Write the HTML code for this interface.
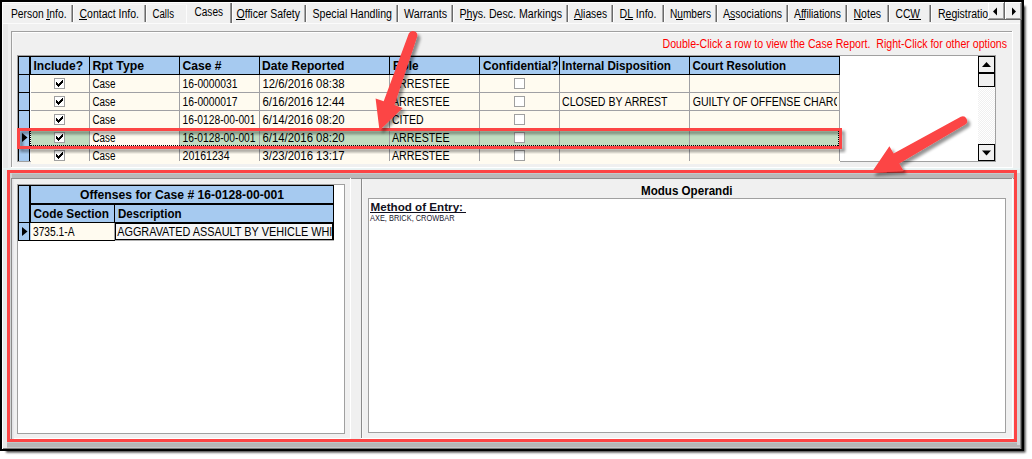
<!DOCTYPE html>
<html><head><meta charset="utf-8"><style>
html,body{margin:0;padding:0;background:#fff;}
body{width:1032px;height:459px;overflow:hidden;font-family:"Liberation Sans",sans-serif;}
svg text{font-family:"Liberation Sans",sans-serif;}
svg{display:block;}
</style></head><body>
<svg width="1032" height="459" viewBox="0 0 1032 459">
<defs>
<filter id="wsh" x="-5%" y="-5%" width="110%" height="110%"><feGaussianBlur stdDeviation="1.3"/></filter>
<filter id="ash" x="-20%" y="-20%" width="140%" height="140%">
 <feGaussianBlur in="SourceAlpha" stdDeviation="1.6"/>
 <feOffset dx="3" dy="3" result="o"/>
 <feComponentTransfer><feFuncA type="linear" slope="0.42"/></feComponentTransfer>
 <feMerge><feMergeNode/><feMergeNode in="SourceGraphic"/></feMerge>
</filter>
<pattern id="dith" width="2" height="2" patternUnits="userSpaceOnUse"><rect width="2" height="2" fill="#f0f0f0"/><rect width="1" height="1" fill="#fff"/><rect x="1" y="1" width="1" height="1" fill="#fff"/></pattern>
</defs>
<rect x="0" y="0" width="1032" height="459" fill="#fff"/>
<rect x="6" y="6" width="1019.5" height="446.5" fill="#000" opacity="0.75" filter="url(#wsh)"/>
<g shape-rendering="crispEdges">
<rect x="0" y="0" width="1024" height="451" fill="#f0f0f0"/>
<rect x="0" y="0" width="1024" height="2" fill="#000"/>
<rect x="0" y="449" width="1024" height="2" fill="#000"/>
<rect x="0" y="0" width="2" height="451" fill="#000"/>
<rect x="1022" y="0" width="2" height="451" fill="#000"/>
<rect x="2" y="2" width="1" height="447" fill="#fff"/>
<rect x="2" y="2" width="1020" height="1" fill="#fff"/>
<rect x="1021" y="2" width="1" height="447" fill="#3a3a3a"/>
<rect x="1020" y="2" width="1" height="447" fill="#8c8c8c"/>
<rect x="3" y="24" width="5" height="425" fill="#e8e8e8"/>
<rect x="3" y="23" width="1017" height="1" fill="#fbfbfb"/>
<rect x="71" y="5" width="1" height="17" fill="#a8a8a8"/>
<rect x="72" y="5" width="1" height="17" fill="#6a6a6a"/>
<rect x="73" y="5" width="1" height="17" fill="#fcfcfc"/>
<rect x="144" y="5" width="1" height="17" fill="#a8a8a8"/>
<rect x="145" y="5" width="1" height="17" fill="#6a6a6a"/>
<rect x="146" y="5" width="1" height="17" fill="#fcfcfc"/>
<rect x="304" y="5" width="1" height="17" fill="#a8a8a8"/>
<rect x="305" y="5" width="1" height="17" fill="#6a6a6a"/>
<rect x="306" y="5" width="1" height="17" fill="#fcfcfc"/>
<rect x="396" y="5" width="1" height="17" fill="#a8a8a8"/>
<rect x="397" y="5" width="1" height="17" fill="#6a6a6a"/>
<rect x="398" y="5" width="1" height="17" fill="#fcfcfc"/>
<rect x="451" y="5" width="1" height="17" fill="#a8a8a8"/>
<rect x="452" y="5" width="1" height="17" fill="#6a6a6a"/>
<rect x="453" y="5" width="1" height="17" fill="#fcfcfc"/>
<rect x="566" y="5" width="1" height="17" fill="#a8a8a8"/>
<rect x="567" y="5" width="1" height="17" fill="#6a6a6a"/>
<rect x="568" y="5" width="1" height="17" fill="#fcfcfc"/>
<rect x="611" y="5" width="1" height="17" fill="#a8a8a8"/>
<rect x="612" y="5" width="1" height="17" fill="#6a6a6a"/>
<rect x="613" y="5" width="1" height="17" fill="#fcfcfc"/>
<rect x="662" y="5" width="1" height="17" fill="#a8a8a8"/>
<rect x="663" y="5" width="1" height="17" fill="#6a6a6a"/>
<rect x="664" y="5" width="1" height="17" fill="#fcfcfc"/>
<rect x="715" y="5" width="1" height="17" fill="#a8a8a8"/>
<rect x="716" y="5" width="1" height="17" fill="#6a6a6a"/>
<rect x="717" y="5" width="1" height="17" fill="#fcfcfc"/>
<rect x="786" y="5" width="1" height="17" fill="#a8a8a8"/>
<rect x="787" y="5" width="1" height="17" fill="#6a6a6a"/>
<rect x="788" y="5" width="1" height="17" fill="#fcfcfc"/>
<rect x="845" y="5" width="1" height="17" fill="#a8a8a8"/>
<rect x="846" y="5" width="1" height="17" fill="#6a6a6a"/>
<rect x="847" y="5" width="1" height="17" fill="#fcfcfc"/>
<rect x="887" y="5" width="1" height="17" fill="#a8a8a8"/>
<rect x="888" y="5" width="1" height="17" fill="#6a6a6a"/>
<rect x="889" y="5" width="1" height="17" fill="#fcfcfc"/>
<rect x="929" y="5" width="1" height="17" fill="#a8a8a8"/>
<rect x="930" y="5" width="1" height="17" fill="#6a6a6a"/>
<rect x="931" y="5" width="1" height="17" fill="#fcfcfc"/>
<rect x="230" y="3" width="1" height="20" fill="#909090"/>
<rect x="231" y="3" width="1" height="20" fill="#6a6a6a"/>
<rect x="232" y="3" width="1" height="20" fill="#fcfcfc"/>
<rect x="186" y="4" width="1" height="20" fill="#fcfcfc"/>
<rect x="3" y="4" width="184" height="1" fill="#f6f6f6"/>
<text x="11" y="18" font-size="12" textLength="55.5" lengthAdjust="spacingAndGlyphs" xml:space="preserve">Person Info.</text>
<rect x="46" y="19" width="4" height="1" fill="#000"/>
<text x="79.5" y="18" font-size="12" textLength="59.5" lengthAdjust="spacingAndGlyphs" xml:space="preserve">Contact Info.</text>
<rect x="79" y="19" width="8" height="1" fill="#000"/>
<text x="152.5" y="18" font-size="12" textLength="21.5" lengthAdjust="spacingAndGlyphs" xml:space="preserve">Calls</text>
<text x="236.5" y="18" font-size="12" textLength="63.5" lengthAdjust="spacingAndGlyphs" xml:space="preserve">Officer Safety</text>
<rect x="236" y="19" width="9" height="1" fill="#000"/>
<text x="312.5" y="18" font-size="12" textLength="79.5" lengthAdjust="spacingAndGlyphs" xml:space="preserve">Special Handling</text>
<text x="404" y="18" font-size="12" textLength="43" lengthAdjust="spacingAndGlyphs" xml:space="preserve">Warrants</text>
<text x="459.5" y="18" font-size="12" textLength="102.5" lengthAdjust="spacingAndGlyphs" xml:space="preserve">Phys. Desc. Markings</text>
<rect x="465" y="19" width="7" height="1" fill="#000"/>
<text x="574" y="18" font-size="12" textLength="33" lengthAdjust="spacingAndGlyphs" xml:space="preserve">Aliases</text>
<rect x="574" y="19" width="8" height="1" fill="#000"/>
<text x="619.5" y="18" font-size="12" textLength="37.0" lengthAdjust="spacingAndGlyphs" xml:space="preserve">DL Info.</text>
<rect x="625" y="19" width="8" height="1" fill="#000"/>
<text x="670" y="18" font-size="12" textLength="41" lengthAdjust="spacingAndGlyphs" xml:space="preserve">Numbers</text>
<rect x="676" y="19" width="7" height="1" fill="#000"/>
<text x="723" y="18" font-size="12" textLength="59" lengthAdjust="spacingAndGlyphs" xml:space="preserve">Associations</text>
<rect x="729" y="19" width="6" height="1" fill="#000"/>
<text x="794" y="18" font-size="12" textLength="47" lengthAdjust="spacingAndGlyphs" xml:space="preserve">Affiliations</text>
<rect x="799" y="19" width="6" height="1" fill="#000"/>
<text x="853.5" y="18" font-size="12" textLength="27.5" lengthAdjust="spacingAndGlyphs" xml:space="preserve">Notes</text>
<rect x="854" y="19" width="8" height="1" fill="#000"/>
<text x="895.5" y="18" font-size="12" textLength="24.5" lengthAdjust="spacingAndGlyphs" xml:space="preserve">CCW</text>
<rect x="909" y="19" width="12" height="1" fill="#000"/>
<text x="194.5" y="16" font-size="12" textLength="28.5" lengthAdjust="spacingAndGlyphs" xml:space="preserve">Cases</text>
<svg x="930" y="0" width="58" height="24" overflow="hidden">
<text x="8" y="18" font-size="12" textLength="56" lengthAdjust="spacingAndGlyphs" xml:space="preserve">Registration</text>
</svg>
<rect x="945" y="19" width="7" height="1" fill="#000"/>
<rect x="988" y="2" width="17" height="18" fill="#f0f0f0"/>
<rect x="988" y="2" width="17" height="1" fill="#fff"/>
<rect x="988" y="2" width="1" height="18" fill="#fff"/>
<rect x="988" y="19" width="17" height="1" fill="#696969"/>
<rect x="1004" y="2" width="1" height="18" fill="#696969"/>
<rect x="989" y="18" width="15" height="1" fill="#a0a0a0"/>
<rect x="1003" y="3" width="1" height="16" fill="#a0a0a0"/>
<rect x="1005" y="2" width="17" height="18" fill="#f0f0f0"/>
<rect x="1005" y="2" width="17" height="1" fill="#fff"/>
<rect x="1005" y="2" width="1" height="18" fill="#fff"/>
<rect x="1005" y="19" width="17" height="1" fill="#696969"/>
<rect x="1021" y="2" width="1" height="18" fill="#696969"/>
<rect x="1006" y="18" width="15" height="1" fill="#a0a0a0"/>
<rect x="1020" y="3" width="1" height="16" fill="#a0a0a0"/>
<path d="M993 11.5 L997 7.5 L997 15.5 Z" fill="#000" shape-rendering="auto"/>
<path d="M1016 11.5 L1012 7.5 L1012 15.5 Z" fill="#000" shape-rendering="auto"/>
<rect x="11" y="31" width="1001" height="1" fill="#a0a0a0"/>
<rect x="12" y="32" width="1001" height="1" fill="#fff"/>
<rect x="11" y="31" width="1" height="136" fill="#a0a0a0"/>
<rect x="12" y="32" width="1" height="135" fill="#f8f8f8"/>
<rect x="1012" y="31" width="1" height="137" fill="#fff"/>
<rect x="11" y="167" width="1002" height="1" fill="#fff"/>
<text x="662.5" y="48" font-size="12" fill="#ff0000" textLength="344.5" lengthAdjust="spacingAndGlyphs" xml:space="preserve">Double-Click a row to view the Case Report.  Right-Click for other options</text>
<rect x="17" y="55" width="979" height="107" fill="#fff"/>
<rect x="17" y="55" width="979" height="1" fill="#a0a0a0"/>
<rect x="17" y="55" width="1" height="107" fill="#a0a0a0"/>
<rect x="995" y="55" width="1" height="107" fill="#a0a0a0"/>
<rect x="17" y="161" width="979" height="1" fill="#a0a0a0"/>
<rect x="18" y="56" width="822" height="19" fill="#a6caf0"/>
<rect x="31" y="75" width="809" height="17" fill="#fffbf0"/>
<rect x="31" y="93" width="809" height="17" fill="#fffbf0"/>
<rect x="31" y="111" width="809" height="17" fill="#fffbf0"/>
<rect x="31" y="129" width="809" height="17" fill="#fffbf0"/>
<rect x="31" y="147" width="809" height="17" fill="#fffbf0"/>
<rect x="31" y="129" width="809" height="17" fill="#c0dcc0"/>
<rect x="90" y="129" width="89" height="17" fill="#fffbf0"/>
<rect x="19" y="75" width="10" height="86" fill="#a6caf0"/>
<rect x="31" y="92" width="809" height="1" fill="#a0a0a4"/>
<rect x="31" y="110" width="809" height="1" fill="#a0a0a4"/>
<rect x="31" y="128" width="809" height="1" fill="#a0a0a4"/>
<rect x="31" y="146" width="809" height="1" fill="#a0a0a4"/>
<rect x="89" y="75" width="1" height="86" fill="#a0a0a4"/>
<rect x="179" y="75" width="1" height="86" fill="#a0a0a4"/>
<rect x="259" y="75" width="1" height="86" fill="#a0a0a4"/>
<rect x="389" y="75" width="1" height="86" fill="#a0a0a4"/>
<rect x="479" y="75" width="1" height="86" fill="#a0a0a4"/>
<rect x="559" y="75" width="1" height="86" fill="#a0a0a4"/>
<rect x="689" y="75" width="1" height="86" fill="#a0a0a4"/>
<rect x="839" y="75" width="1" height="86" fill="#a0a0a4"/>
<rect x="18" y="56" width="822" height="1" fill="#000"/>
<rect x="18" y="74" width="822" height="1" fill="#000"/>
<rect x="18" y="56" width="1" height="105" fill="#000"/>
<rect x="29" y="56" width="1" height="105" fill="#000"/>
<rect x="30" y="56" width="1" height="19" fill="#000"/>
<rect x="89" y="56" width="1" height="19" fill="#000"/>
<rect x="179" y="56" width="1" height="19" fill="#000"/>
<rect x="259" y="56" width="1" height="19" fill="#000"/>
<rect x="389" y="56" width="1" height="19" fill="#000"/>
<rect x="479" y="56" width="1" height="19" fill="#000"/>
<rect x="559" y="56" width="1" height="19" fill="#000"/>
<rect x="689" y="56" width="1" height="19" fill="#000"/>
<rect x="839" y="56" width="1" height="19" fill="#000"/>
<rect x="19" y="92" width="10" height="1" fill="#000"/>
<rect x="19" y="110" width="10" height="1" fill="#000"/>
<rect x="19" y="128" width="10" height="1" fill="#000"/>
<rect x="19" y="146" width="10" height="1" fill="#000"/>
<text x="33.5" y="70" font-size="12" font-weight="bold" textLength="49.5" lengthAdjust="spacingAndGlyphs" xml:space="preserve">Include?</text>
<text x="92.5" y="70" font-size="12" font-weight="bold" textLength="51.5" lengthAdjust="spacingAndGlyphs" xml:space="preserve">Rpt Type</text>
<text x="182.5" y="70" font-size="12" font-weight="bold" textLength="39.0" lengthAdjust="spacingAndGlyphs" xml:space="preserve">Case #</text>
<text x="262" y="70" font-size="12" font-weight="bold" textLength="82.5" lengthAdjust="spacingAndGlyphs" xml:space="preserve">Date Reported</text>
<text x="393" y="70" font-size="12" font-weight="bold" textLength="25.5" lengthAdjust="spacingAndGlyphs" xml:space="preserve">Role</text>
<text x="483" y="70" font-size="12" font-weight="bold" textLength="75.5" lengthAdjust="spacingAndGlyphs" xml:space="preserve">Confidential?</text>
<text x="562" y="70" font-size="12" font-weight="bold" textLength="109" lengthAdjust="spacingAndGlyphs" xml:space="preserve">Internal Disposition</text>
<text x="692.5" y="70" font-size="12" font-weight="bold" textLength="93.5" lengthAdjust="spacingAndGlyphs" xml:space="preserve">Court Resolution</text>
</g>
<svg x="0" y="0" width="1032" height="161" overflow="hidden">
<text x="92.5" y="88" font-size="12" textLength="23" lengthAdjust="spacingAndGlyphs" xml:space="preserve">Case</text>
<text x="182.5" y="88" font-size="12" textLength="55" lengthAdjust="spacingAndGlyphs" xml:space="preserve">16-0000031</text>
<text x="262.5" y="88" font-size="12" textLength="82" lengthAdjust="spacingAndGlyphs" xml:space="preserve">12/6/2016 08:38</text>
<text x="392" y="88" font-size="12" textLength="57.5" lengthAdjust="spacingAndGlyphs" xml:space="preserve">ARRESTEE</text>
<text x="92.5" y="106" font-size="12" textLength="23" lengthAdjust="spacingAndGlyphs" xml:space="preserve">Case</text>
<text x="182.5" y="106" font-size="12" textLength="55" lengthAdjust="spacingAndGlyphs" xml:space="preserve">16-0000017</text>
<text x="262.5" y="106" font-size="12" textLength="82" lengthAdjust="spacingAndGlyphs" xml:space="preserve">6/16/2016 12:44</text>
<text x="392" y="106" font-size="12" textLength="57.5" lengthAdjust="spacingAndGlyphs" xml:space="preserve">ARRESTEE</text>
<text x="562" y="106" font-size="12" textLength="105.5" lengthAdjust="spacingAndGlyphs" xml:space="preserve">CLOSED BY ARREST</text>
<svg x="690" y="0" width="147" height="161" overflow="hidden">
<text x="2.7" y="106" font-size="12" textLength="156" lengthAdjust="spacingAndGlyphs" xml:space="preserve">GUILTY OF OFFENSE CHARGE</text>
</svg>
<text x="92.5" y="124" font-size="12" textLength="23" lengthAdjust="spacingAndGlyphs" xml:space="preserve">Case</text>
<text x="182.5" y="124" font-size="12" textLength="73" lengthAdjust="spacingAndGlyphs" xml:space="preserve">16-0128-00-001</text>
<text x="262.5" y="124" font-size="12" textLength="82" lengthAdjust="spacingAndGlyphs" xml:space="preserve">6/14/2016 08:20</text>
<text x="392" y="124" font-size="12" textLength="31.5" lengthAdjust="spacingAndGlyphs" xml:space="preserve">CITED</text>
<text x="92.5" y="142" font-size="12" textLength="23" lengthAdjust="spacingAndGlyphs" xml:space="preserve">Case</text>
<text x="182.5" y="142" font-size="12" textLength="73" lengthAdjust="spacingAndGlyphs" xml:space="preserve">16-0128-00-001</text>
<text x="262.5" y="142" font-size="12" textLength="82" lengthAdjust="spacingAndGlyphs" xml:space="preserve">6/14/2016 08:20</text>
<text x="392" y="142" font-size="12" textLength="57.5" lengthAdjust="spacingAndGlyphs" xml:space="preserve">ARRESTEE</text>
<text x="92.5" y="160" font-size="12" textLength="23" lengthAdjust="spacingAndGlyphs" xml:space="preserve">Case</text>
<text x="182.5" y="160" font-size="12" textLength="47" lengthAdjust="spacingAndGlyphs" xml:space="preserve">20161234</text>
<text x="262.5" y="160" font-size="12" textLength="82" lengthAdjust="spacingAndGlyphs" xml:space="preserve">3/23/2016 13:17</text>
<text x="392" y="160" font-size="12" textLength="57.5" lengthAdjust="spacingAndGlyphs" xml:space="preserve">ARRESTEE</text>
</svg>
<g shape-rendering="crispEdges">
<rect x="54" y="78" width="11" height="11" fill="#a0a0a0"/>
<rect x="55" y="79" width="9" height="9" fill="#fff"/>
<rect x="62" y="80" width="1" height="1" fill="#000"/>
<rect x="61" y="81" width="1" height="1" fill="#000"/>
<rect x="62" y="81" width="1" height="1" fill="#000"/>
<rect x="56" y="82" width="1" height="1" fill="#000"/>
<rect x="60" y="82" width="1" height="1" fill="#000"/>
<rect x="61" y="82" width="1" height="1" fill="#000"/>
<rect x="62" y="82" width="1" height="1" fill="#000"/>
<rect x="56" y="83" width="1" height="1" fill="#000"/>
<rect x="57" y="83" width="1" height="1" fill="#000"/>
<rect x="59" y="83" width="1" height="1" fill="#000"/>
<rect x="60" y="83" width="1" height="1" fill="#000"/>
<rect x="61" y="83" width="1" height="1" fill="#000"/>
<rect x="56" y="84" width="1" height="1" fill="#000"/>
<rect x="57" y="84" width="1" height="1" fill="#000"/>
<rect x="58" y="84" width="1" height="1" fill="#000"/>
<rect x="59" y="84" width="1" height="1" fill="#000"/>
<rect x="60" y="84" width="1" height="1" fill="#000"/>
<rect x="57" y="85" width="1" height="1" fill="#000"/>
<rect x="58" y="85" width="1" height="1" fill="#000"/>
<rect x="59" y="85" width="1" height="1" fill="#000"/>
<rect x="58" y="86" width="1" height="1" fill="#000"/>
<rect x="514" y="78" width="11" height="11" fill="#a0a0a0"/>
<rect x="515" y="79" width="9" height="9" fill="#fff"/>
<rect x="54" y="96" width="11" height="11" fill="#a0a0a0"/>
<rect x="55" y="97" width="9" height="9" fill="#fff"/>
<rect x="62" y="98" width="1" height="1" fill="#000"/>
<rect x="61" y="99" width="1" height="1" fill="#000"/>
<rect x="62" y="99" width="1" height="1" fill="#000"/>
<rect x="56" y="100" width="1" height="1" fill="#000"/>
<rect x="60" y="100" width="1" height="1" fill="#000"/>
<rect x="61" y="100" width="1" height="1" fill="#000"/>
<rect x="62" y="100" width="1" height="1" fill="#000"/>
<rect x="56" y="101" width="1" height="1" fill="#000"/>
<rect x="57" y="101" width="1" height="1" fill="#000"/>
<rect x="59" y="101" width="1" height="1" fill="#000"/>
<rect x="60" y="101" width="1" height="1" fill="#000"/>
<rect x="61" y="101" width="1" height="1" fill="#000"/>
<rect x="56" y="102" width="1" height="1" fill="#000"/>
<rect x="57" y="102" width="1" height="1" fill="#000"/>
<rect x="58" y="102" width="1" height="1" fill="#000"/>
<rect x="59" y="102" width="1" height="1" fill="#000"/>
<rect x="60" y="102" width="1" height="1" fill="#000"/>
<rect x="57" y="103" width="1" height="1" fill="#000"/>
<rect x="58" y="103" width="1" height="1" fill="#000"/>
<rect x="59" y="103" width="1" height="1" fill="#000"/>
<rect x="58" y="104" width="1" height="1" fill="#000"/>
<rect x="514" y="96" width="11" height="11" fill="#a0a0a0"/>
<rect x="515" y="97" width="9" height="9" fill="#fff"/>
<rect x="54" y="114" width="11" height="11" fill="#a0a0a0"/>
<rect x="55" y="115" width="9" height="9" fill="#fff"/>
<rect x="62" y="116" width="1" height="1" fill="#000"/>
<rect x="61" y="117" width="1" height="1" fill="#000"/>
<rect x="62" y="117" width="1" height="1" fill="#000"/>
<rect x="56" y="118" width="1" height="1" fill="#000"/>
<rect x="60" y="118" width="1" height="1" fill="#000"/>
<rect x="61" y="118" width="1" height="1" fill="#000"/>
<rect x="62" y="118" width="1" height="1" fill="#000"/>
<rect x="56" y="119" width="1" height="1" fill="#000"/>
<rect x="57" y="119" width="1" height="1" fill="#000"/>
<rect x="59" y="119" width="1" height="1" fill="#000"/>
<rect x="60" y="119" width="1" height="1" fill="#000"/>
<rect x="61" y="119" width="1" height="1" fill="#000"/>
<rect x="56" y="120" width="1" height="1" fill="#000"/>
<rect x="57" y="120" width="1" height="1" fill="#000"/>
<rect x="58" y="120" width="1" height="1" fill="#000"/>
<rect x="59" y="120" width="1" height="1" fill="#000"/>
<rect x="60" y="120" width="1" height="1" fill="#000"/>
<rect x="57" y="121" width="1" height="1" fill="#000"/>
<rect x="58" y="121" width="1" height="1" fill="#000"/>
<rect x="59" y="121" width="1" height="1" fill="#000"/>
<rect x="58" y="122" width="1" height="1" fill="#000"/>
<rect x="514" y="114" width="11" height="11" fill="#a0a0a0"/>
<rect x="515" y="115" width="9" height="9" fill="#fff"/>
<rect x="54" y="132" width="11" height="11" fill="#a0a0a0"/>
<rect x="55" y="133" width="9" height="9" fill="#fff"/>
<rect x="62" y="134" width="1" height="1" fill="#000"/>
<rect x="61" y="135" width="1" height="1" fill="#000"/>
<rect x="62" y="135" width="1" height="1" fill="#000"/>
<rect x="56" y="136" width="1" height="1" fill="#000"/>
<rect x="60" y="136" width="1" height="1" fill="#000"/>
<rect x="61" y="136" width="1" height="1" fill="#000"/>
<rect x="62" y="136" width="1" height="1" fill="#000"/>
<rect x="56" y="137" width="1" height="1" fill="#000"/>
<rect x="57" y="137" width="1" height="1" fill="#000"/>
<rect x="59" y="137" width="1" height="1" fill="#000"/>
<rect x="60" y="137" width="1" height="1" fill="#000"/>
<rect x="61" y="137" width="1" height="1" fill="#000"/>
<rect x="56" y="138" width="1" height="1" fill="#000"/>
<rect x="57" y="138" width="1" height="1" fill="#000"/>
<rect x="58" y="138" width="1" height="1" fill="#000"/>
<rect x="59" y="138" width="1" height="1" fill="#000"/>
<rect x="60" y="138" width="1" height="1" fill="#000"/>
<rect x="57" y="139" width="1" height="1" fill="#000"/>
<rect x="58" y="139" width="1" height="1" fill="#000"/>
<rect x="59" y="139" width="1" height="1" fill="#000"/>
<rect x="58" y="140" width="1" height="1" fill="#000"/>
<rect x="514" y="132" width="11" height="11" fill="#a0a0a0"/>
<rect x="515" y="133" width="9" height="9" fill="#fff"/>
<rect x="54" y="150" width="11" height="11" fill="#a0a0a0"/>
<rect x="55" y="151" width="9" height="9" fill="#fff"/>
<rect x="62" y="152" width="1" height="1" fill="#000"/>
<rect x="61" y="153" width="1" height="1" fill="#000"/>
<rect x="62" y="153" width="1" height="1" fill="#000"/>
<rect x="56" y="154" width="1" height="1" fill="#000"/>
<rect x="60" y="154" width="1" height="1" fill="#000"/>
<rect x="61" y="154" width="1" height="1" fill="#000"/>
<rect x="62" y="154" width="1" height="1" fill="#000"/>
<rect x="56" y="155" width="1" height="1" fill="#000"/>
<rect x="57" y="155" width="1" height="1" fill="#000"/>
<rect x="59" y="155" width="1" height="1" fill="#000"/>
<rect x="60" y="155" width="1" height="1" fill="#000"/>
<rect x="61" y="155" width="1" height="1" fill="#000"/>
<rect x="56" y="156" width="1" height="1" fill="#000"/>
<rect x="57" y="156" width="1" height="1" fill="#000"/>
<rect x="58" y="156" width="1" height="1" fill="#000"/>
<rect x="59" y="156" width="1" height="1" fill="#000"/>
<rect x="60" y="156" width="1" height="1" fill="#000"/>
<rect x="57" y="157" width="1" height="1" fill="#000"/>
<rect x="58" y="157" width="1" height="1" fill="#000"/>
<rect x="59" y="157" width="1" height="1" fill="#000"/>
<rect x="58" y="158" width="1" height="1" fill="#000"/>
<rect x="514" y="150" width="11" height="11" fill="#a0a0a0"/>
<rect x="515" y="151" width="9" height="9" fill="#fff"/>
<path d="M22 133 L27.5 137.5 L22 142 Z" fill="#000" shape-rendering="auto"/>
<rect x="31" y="145" width="1" height="1" fill="#000"/>
<rect x="33" y="145" width="1" height="1" fill="#000"/>
<rect x="35" y="145" width="1" height="1" fill="#000"/>
<rect x="37" y="145" width="1" height="1" fill="#000"/>
<rect x="39" y="145" width="1" height="1" fill="#000"/>
<rect x="41" y="145" width="1" height="1" fill="#000"/>
<rect x="43" y="145" width="1" height="1" fill="#000"/>
<rect x="45" y="145" width="1" height="1" fill="#000"/>
<rect x="47" y="145" width="1" height="1" fill="#000"/>
<rect x="49" y="145" width="1" height="1" fill="#000"/>
<rect x="51" y="145" width="1" height="1" fill="#000"/>
<rect x="53" y="145" width="1" height="1" fill="#000"/>
<rect x="55" y="145" width="1" height="1" fill="#000"/>
<rect x="57" y="145" width="1" height="1" fill="#000"/>
<rect x="59" y="145" width="1" height="1" fill="#000"/>
<rect x="61" y="145" width="1" height="1" fill="#000"/>
<rect x="63" y="145" width="1" height="1" fill="#000"/>
<rect x="65" y="145" width="1" height="1" fill="#000"/>
<rect x="67" y="145" width="1" height="1" fill="#000"/>
<rect x="69" y="145" width="1" height="1" fill="#000"/>
<rect x="71" y="145" width="1" height="1" fill="#000"/>
<rect x="73" y="145" width="1" height="1" fill="#000"/>
<rect x="75" y="145" width="1" height="1" fill="#000"/>
<rect x="77" y="145" width="1" height="1" fill="#000"/>
<rect x="79" y="145" width="1" height="1" fill="#000"/>
<rect x="81" y="145" width="1" height="1" fill="#000"/>
<rect x="83" y="145" width="1" height="1" fill="#000"/>
<rect x="85" y="145" width="1" height="1" fill="#000"/>
<rect x="87" y="145" width="1" height="1" fill="#000"/>
<rect x="89" y="145" width="1" height="1" fill="#000"/>
<rect x="91" y="145" width="1" height="1" fill="#000"/>
<rect x="93" y="145" width="1" height="1" fill="#000"/>
<rect x="95" y="145" width="1" height="1" fill="#000"/>
<rect x="97" y="145" width="1" height="1" fill="#000"/>
<rect x="99" y="145" width="1" height="1" fill="#000"/>
<rect x="101" y="145" width="1" height="1" fill="#000"/>
<rect x="103" y="145" width="1" height="1" fill="#000"/>
<rect x="105" y="145" width="1" height="1" fill="#000"/>
<rect x="107" y="145" width="1" height="1" fill="#000"/>
<rect x="109" y="145" width="1" height="1" fill="#000"/>
<rect x="111" y="145" width="1" height="1" fill="#000"/>
<rect x="113" y="145" width="1" height="1" fill="#000"/>
<rect x="115" y="145" width="1" height="1" fill="#000"/>
<rect x="117" y="145" width="1" height="1" fill="#000"/>
<rect x="119" y="145" width="1" height="1" fill="#000"/>
<rect x="121" y="145" width="1" height="1" fill="#000"/>
<rect x="123" y="145" width="1" height="1" fill="#000"/>
<rect x="125" y="145" width="1" height="1" fill="#000"/>
<rect x="127" y="145" width="1" height="1" fill="#000"/>
<rect x="129" y="145" width="1" height="1" fill="#000"/>
<rect x="131" y="145" width="1" height="1" fill="#000"/>
<rect x="133" y="145" width="1" height="1" fill="#000"/>
<rect x="135" y="145" width="1" height="1" fill="#000"/>
<rect x="137" y="145" width="1" height="1" fill="#000"/>
<rect x="139" y="145" width="1" height="1" fill="#000"/>
<rect x="141" y="145" width="1" height="1" fill="#000"/>
<rect x="143" y="145" width="1" height="1" fill="#000"/>
<rect x="145" y="145" width="1" height="1" fill="#000"/>
<rect x="147" y="145" width="1" height="1" fill="#000"/>
<rect x="149" y="145" width="1" height="1" fill="#000"/>
<rect x="151" y="145" width="1" height="1" fill="#000"/>
<rect x="153" y="145" width="1" height="1" fill="#000"/>
<rect x="155" y="145" width="1" height="1" fill="#000"/>
<rect x="157" y="145" width="1" height="1" fill="#000"/>
<rect x="159" y="145" width="1" height="1" fill="#000"/>
<rect x="161" y="145" width="1" height="1" fill="#000"/>
<rect x="163" y="145" width="1" height="1" fill="#000"/>
<rect x="165" y="145" width="1" height="1" fill="#000"/>
<rect x="167" y="145" width="1" height="1" fill="#000"/>
<rect x="169" y="145" width="1" height="1" fill="#000"/>
<rect x="171" y="145" width="1" height="1" fill="#000"/>
<rect x="173" y="145" width="1" height="1" fill="#000"/>
<rect x="175" y="145" width="1" height="1" fill="#000"/>
<rect x="177" y="145" width="1" height="1" fill="#000"/>
<rect x="179" y="145" width="1" height="1" fill="#000"/>
<rect x="181" y="145" width="1" height="1" fill="#000"/>
<rect x="183" y="145" width="1" height="1" fill="#000"/>
<rect x="185" y="145" width="1" height="1" fill="#000"/>
<rect x="187" y="145" width="1" height="1" fill="#000"/>
<rect x="189" y="145" width="1" height="1" fill="#000"/>
<rect x="191" y="145" width="1" height="1" fill="#000"/>
<rect x="193" y="145" width="1" height="1" fill="#000"/>
<rect x="195" y="145" width="1" height="1" fill="#000"/>
<rect x="197" y="145" width="1" height="1" fill="#000"/>
<rect x="199" y="145" width="1" height="1" fill="#000"/>
<rect x="201" y="145" width="1" height="1" fill="#000"/>
<rect x="203" y="145" width="1" height="1" fill="#000"/>
<rect x="205" y="145" width="1" height="1" fill="#000"/>
<rect x="207" y="145" width="1" height="1" fill="#000"/>
<rect x="209" y="145" width="1" height="1" fill="#000"/>
<rect x="211" y="145" width="1" height="1" fill="#000"/>
<rect x="213" y="145" width="1" height="1" fill="#000"/>
<rect x="215" y="145" width="1" height="1" fill="#000"/>
<rect x="217" y="145" width="1" height="1" fill="#000"/>
<rect x="219" y="145" width="1" height="1" fill="#000"/>
<rect x="221" y="145" width="1" height="1" fill="#000"/>
<rect x="223" y="145" width="1" height="1" fill="#000"/>
<rect x="225" y="145" width="1" height="1" fill="#000"/>
<rect x="227" y="145" width="1" height="1" fill="#000"/>
<rect x="229" y="145" width="1" height="1" fill="#000"/>
<rect x="231" y="145" width="1" height="1" fill="#000"/>
<rect x="233" y="145" width="1" height="1" fill="#000"/>
<rect x="235" y="145" width="1" height="1" fill="#000"/>
<rect x="237" y="145" width="1" height="1" fill="#000"/>
<rect x="239" y="145" width="1" height="1" fill="#000"/>
<rect x="241" y="145" width="1" height="1" fill="#000"/>
<rect x="243" y="145" width="1" height="1" fill="#000"/>
<rect x="245" y="145" width="1" height="1" fill="#000"/>
<rect x="247" y="145" width="1" height="1" fill="#000"/>
<rect x="249" y="145" width="1" height="1" fill="#000"/>
<rect x="251" y="145" width="1" height="1" fill="#000"/>
<rect x="253" y="145" width="1" height="1" fill="#000"/>
<rect x="255" y="145" width="1" height="1" fill="#000"/>
<rect x="257" y="145" width="1" height="1" fill="#000"/>
<rect x="259" y="145" width="1" height="1" fill="#000"/>
<rect x="261" y="145" width="1" height="1" fill="#000"/>
<rect x="263" y="145" width="1" height="1" fill="#000"/>
<rect x="265" y="145" width="1" height="1" fill="#000"/>
<rect x="267" y="145" width="1" height="1" fill="#000"/>
<rect x="269" y="145" width="1" height="1" fill="#000"/>
<rect x="271" y="145" width="1" height="1" fill="#000"/>
<rect x="273" y="145" width="1" height="1" fill="#000"/>
<rect x="275" y="145" width="1" height="1" fill="#000"/>
<rect x="277" y="145" width="1" height="1" fill="#000"/>
<rect x="279" y="145" width="1" height="1" fill="#000"/>
<rect x="281" y="145" width="1" height="1" fill="#000"/>
<rect x="283" y="145" width="1" height="1" fill="#000"/>
<rect x="285" y="145" width="1" height="1" fill="#000"/>
<rect x="287" y="145" width="1" height="1" fill="#000"/>
<rect x="289" y="145" width="1" height="1" fill="#000"/>
<rect x="291" y="145" width="1" height="1" fill="#000"/>
<rect x="293" y="145" width="1" height="1" fill="#000"/>
<rect x="295" y="145" width="1" height="1" fill="#000"/>
<rect x="297" y="145" width="1" height="1" fill="#000"/>
<rect x="299" y="145" width="1" height="1" fill="#000"/>
<rect x="301" y="145" width="1" height="1" fill="#000"/>
<rect x="303" y="145" width="1" height="1" fill="#000"/>
<rect x="305" y="145" width="1" height="1" fill="#000"/>
<rect x="307" y="145" width="1" height="1" fill="#000"/>
<rect x="309" y="145" width="1" height="1" fill="#000"/>
<rect x="311" y="145" width="1" height="1" fill="#000"/>
<rect x="313" y="145" width="1" height="1" fill="#000"/>
<rect x="315" y="145" width="1" height="1" fill="#000"/>
<rect x="317" y="145" width="1" height="1" fill="#000"/>
<rect x="319" y="145" width="1" height="1" fill="#000"/>
<rect x="321" y="145" width="1" height="1" fill="#000"/>
<rect x="323" y="145" width="1" height="1" fill="#000"/>
<rect x="325" y="145" width="1" height="1" fill="#000"/>
<rect x="327" y="145" width="1" height="1" fill="#000"/>
<rect x="329" y="145" width="1" height="1" fill="#000"/>
<rect x="331" y="145" width="1" height="1" fill="#000"/>
<rect x="333" y="145" width="1" height="1" fill="#000"/>
<rect x="335" y="145" width="1" height="1" fill="#000"/>
<rect x="337" y="145" width="1" height="1" fill="#000"/>
<rect x="339" y="145" width="1" height="1" fill="#000"/>
<rect x="341" y="145" width="1" height="1" fill="#000"/>
<rect x="343" y="145" width="1" height="1" fill="#000"/>
<rect x="345" y="145" width="1" height="1" fill="#000"/>
<rect x="347" y="145" width="1" height="1" fill="#000"/>
<rect x="349" y="145" width="1" height="1" fill="#000"/>
<rect x="351" y="145" width="1" height="1" fill="#000"/>
<rect x="353" y="145" width="1" height="1" fill="#000"/>
<rect x="355" y="145" width="1" height="1" fill="#000"/>
<rect x="357" y="145" width="1" height="1" fill="#000"/>
<rect x="359" y="145" width="1" height="1" fill="#000"/>
<rect x="361" y="145" width="1" height="1" fill="#000"/>
<rect x="363" y="145" width="1" height="1" fill="#000"/>
<rect x="365" y="145" width="1" height="1" fill="#000"/>
<rect x="367" y="145" width="1" height="1" fill="#000"/>
<rect x="369" y="145" width="1" height="1" fill="#000"/>
<rect x="371" y="145" width="1" height="1" fill="#000"/>
<rect x="373" y="145" width="1" height="1" fill="#000"/>
<rect x="375" y="145" width="1" height="1" fill="#000"/>
<rect x="377" y="145" width="1" height="1" fill="#000"/>
<rect x="379" y="145" width="1" height="1" fill="#000"/>
<rect x="381" y="145" width="1" height="1" fill="#000"/>
<rect x="383" y="145" width="1" height="1" fill="#000"/>
<rect x="385" y="145" width="1" height="1" fill="#000"/>
<rect x="387" y="145" width="1" height="1" fill="#000"/>
<rect x="389" y="145" width="1" height="1" fill="#000"/>
<rect x="391" y="145" width="1" height="1" fill="#000"/>
<rect x="393" y="145" width="1" height="1" fill="#000"/>
<rect x="395" y="145" width="1" height="1" fill="#000"/>
<rect x="397" y="145" width="1" height="1" fill="#000"/>
<rect x="399" y="145" width="1" height="1" fill="#000"/>
<rect x="401" y="145" width="1" height="1" fill="#000"/>
<rect x="403" y="145" width="1" height="1" fill="#000"/>
<rect x="405" y="145" width="1" height="1" fill="#000"/>
<rect x="407" y="145" width="1" height="1" fill="#000"/>
<rect x="409" y="145" width="1" height="1" fill="#000"/>
<rect x="411" y="145" width="1" height="1" fill="#000"/>
<rect x="413" y="145" width="1" height="1" fill="#000"/>
<rect x="415" y="145" width="1" height="1" fill="#000"/>
<rect x="417" y="145" width="1" height="1" fill="#000"/>
<rect x="419" y="145" width="1" height="1" fill="#000"/>
<rect x="421" y="145" width="1" height="1" fill="#000"/>
<rect x="423" y="145" width="1" height="1" fill="#000"/>
<rect x="425" y="145" width="1" height="1" fill="#000"/>
<rect x="427" y="145" width="1" height="1" fill="#000"/>
<rect x="429" y="145" width="1" height="1" fill="#000"/>
<rect x="431" y="145" width="1" height="1" fill="#000"/>
<rect x="433" y="145" width="1" height="1" fill="#000"/>
<rect x="435" y="145" width="1" height="1" fill="#000"/>
<rect x="437" y="145" width="1" height="1" fill="#000"/>
<rect x="439" y="145" width="1" height="1" fill="#000"/>
<rect x="441" y="145" width="1" height="1" fill="#000"/>
<rect x="443" y="145" width="1" height="1" fill="#000"/>
<rect x="445" y="145" width="1" height="1" fill="#000"/>
<rect x="447" y="145" width="1" height="1" fill="#000"/>
<rect x="449" y="145" width="1" height="1" fill="#000"/>
<rect x="451" y="145" width="1" height="1" fill="#000"/>
<rect x="453" y="145" width="1" height="1" fill="#000"/>
<rect x="455" y="145" width="1" height="1" fill="#000"/>
<rect x="457" y="145" width="1" height="1" fill="#000"/>
<rect x="459" y="145" width="1" height="1" fill="#000"/>
<rect x="461" y="145" width="1" height="1" fill="#000"/>
<rect x="463" y="145" width="1" height="1" fill="#000"/>
<rect x="465" y="145" width="1" height="1" fill="#000"/>
<rect x="467" y="145" width="1" height="1" fill="#000"/>
<rect x="469" y="145" width="1" height="1" fill="#000"/>
<rect x="471" y="145" width="1" height="1" fill="#000"/>
<rect x="473" y="145" width="1" height="1" fill="#000"/>
<rect x="475" y="145" width="1" height="1" fill="#000"/>
<rect x="477" y="145" width="1" height="1" fill="#000"/>
<rect x="479" y="145" width="1" height="1" fill="#000"/>
<rect x="481" y="145" width="1" height="1" fill="#000"/>
<rect x="483" y="145" width="1" height="1" fill="#000"/>
<rect x="485" y="145" width="1" height="1" fill="#000"/>
<rect x="487" y="145" width="1" height="1" fill="#000"/>
<rect x="489" y="145" width="1" height="1" fill="#000"/>
<rect x="491" y="145" width="1" height="1" fill="#000"/>
<rect x="493" y="145" width="1" height="1" fill="#000"/>
<rect x="495" y="145" width="1" height="1" fill="#000"/>
<rect x="497" y="145" width="1" height="1" fill="#000"/>
<rect x="499" y="145" width="1" height="1" fill="#000"/>
<rect x="501" y="145" width="1" height="1" fill="#000"/>
<rect x="503" y="145" width="1" height="1" fill="#000"/>
<rect x="505" y="145" width="1" height="1" fill="#000"/>
<rect x="507" y="145" width="1" height="1" fill="#000"/>
<rect x="509" y="145" width="1" height="1" fill="#000"/>
<rect x="511" y="145" width="1" height="1" fill="#000"/>
<rect x="513" y="145" width="1" height="1" fill="#000"/>
<rect x="515" y="145" width="1" height="1" fill="#000"/>
<rect x="517" y="145" width="1" height="1" fill="#000"/>
<rect x="519" y="145" width="1" height="1" fill="#000"/>
<rect x="521" y="145" width="1" height="1" fill="#000"/>
<rect x="523" y="145" width="1" height="1" fill="#000"/>
<rect x="525" y="145" width="1" height="1" fill="#000"/>
<rect x="527" y="145" width="1" height="1" fill="#000"/>
<rect x="529" y="145" width="1" height="1" fill="#000"/>
<rect x="531" y="145" width="1" height="1" fill="#000"/>
<rect x="533" y="145" width="1" height="1" fill="#000"/>
<rect x="535" y="145" width="1" height="1" fill="#000"/>
<rect x="537" y="145" width="1" height="1" fill="#000"/>
<rect x="539" y="145" width="1" height="1" fill="#000"/>
<rect x="541" y="145" width="1" height="1" fill="#000"/>
<rect x="543" y="145" width="1" height="1" fill="#000"/>
<rect x="545" y="145" width="1" height="1" fill="#000"/>
<rect x="547" y="145" width="1" height="1" fill="#000"/>
<rect x="549" y="145" width="1" height="1" fill="#000"/>
<rect x="551" y="145" width="1" height="1" fill="#000"/>
<rect x="553" y="145" width="1" height="1" fill="#000"/>
<rect x="555" y="145" width="1" height="1" fill="#000"/>
<rect x="557" y="145" width="1" height="1" fill="#000"/>
<rect x="559" y="145" width="1" height="1" fill="#000"/>
<rect x="561" y="145" width="1" height="1" fill="#000"/>
<rect x="563" y="145" width="1" height="1" fill="#000"/>
<rect x="565" y="145" width="1" height="1" fill="#000"/>
<rect x="567" y="145" width="1" height="1" fill="#000"/>
<rect x="569" y="145" width="1" height="1" fill="#000"/>
<rect x="571" y="145" width="1" height="1" fill="#000"/>
<rect x="573" y="145" width="1" height="1" fill="#000"/>
<rect x="575" y="145" width="1" height="1" fill="#000"/>
<rect x="577" y="145" width="1" height="1" fill="#000"/>
<rect x="579" y="145" width="1" height="1" fill="#000"/>
<rect x="581" y="145" width="1" height="1" fill="#000"/>
<rect x="583" y="145" width="1" height="1" fill="#000"/>
<rect x="585" y="145" width="1" height="1" fill="#000"/>
<rect x="587" y="145" width="1" height="1" fill="#000"/>
<rect x="589" y="145" width="1" height="1" fill="#000"/>
<rect x="591" y="145" width="1" height="1" fill="#000"/>
<rect x="593" y="145" width="1" height="1" fill="#000"/>
<rect x="595" y="145" width="1" height="1" fill="#000"/>
<rect x="597" y="145" width="1" height="1" fill="#000"/>
<rect x="599" y="145" width="1" height="1" fill="#000"/>
<rect x="601" y="145" width="1" height="1" fill="#000"/>
<rect x="603" y="145" width="1" height="1" fill="#000"/>
<rect x="605" y="145" width="1" height="1" fill="#000"/>
<rect x="607" y="145" width="1" height="1" fill="#000"/>
<rect x="609" y="145" width="1" height="1" fill="#000"/>
<rect x="611" y="145" width="1" height="1" fill="#000"/>
<rect x="613" y="145" width="1" height="1" fill="#000"/>
<rect x="615" y="145" width="1" height="1" fill="#000"/>
<rect x="617" y="145" width="1" height="1" fill="#000"/>
<rect x="619" y="145" width="1" height="1" fill="#000"/>
<rect x="621" y="145" width="1" height="1" fill="#000"/>
<rect x="623" y="145" width="1" height="1" fill="#000"/>
<rect x="625" y="145" width="1" height="1" fill="#000"/>
<rect x="627" y="145" width="1" height="1" fill="#000"/>
<rect x="629" y="145" width="1" height="1" fill="#000"/>
<rect x="631" y="145" width="1" height="1" fill="#000"/>
<rect x="633" y="145" width="1" height="1" fill="#000"/>
<rect x="635" y="145" width="1" height="1" fill="#000"/>
<rect x="637" y="145" width="1" height="1" fill="#000"/>
<rect x="639" y="145" width="1" height="1" fill="#000"/>
<rect x="641" y="145" width="1" height="1" fill="#000"/>
<rect x="643" y="145" width="1" height="1" fill="#000"/>
<rect x="645" y="145" width="1" height="1" fill="#000"/>
<rect x="647" y="145" width="1" height="1" fill="#000"/>
<rect x="649" y="145" width="1" height="1" fill="#000"/>
<rect x="651" y="145" width="1" height="1" fill="#000"/>
<rect x="653" y="145" width="1" height="1" fill="#000"/>
<rect x="655" y="145" width="1" height="1" fill="#000"/>
<rect x="657" y="145" width="1" height="1" fill="#000"/>
<rect x="659" y="145" width="1" height="1" fill="#000"/>
<rect x="661" y="145" width="1" height="1" fill="#000"/>
<rect x="663" y="145" width="1" height="1" fill="#000"/>
<rect x="665" y="145" width="1" height="1" fill="#000"/>
<rect x="667" y="145" width="1" height="1" fill="#000"/>
<rect x="669" y="145" width="1" height="1" fill="#000"/>
<rect x="671" y="145" width="1" height="1" fill="#000"/>
<rect x="673" y="145" width="1" height="1" fill="#000"/>
<rect x="675" y="145" width="1" height="1" fill="#000"/>
<rect x="677" y="145" width="1" height="1" fill="#000"/>
<rect x="679" y="145" width="1" height="1" fill="#000"/>
<rect x="681" y="145" width="1" height="1" fill="#000"/>
<rect x="683" y="145" width="1" height="1" fill="#000"/>
<rect x="685" y="145" width="1" height="1" fill="#000"/>
<rect x="687" y="145" width="1" height="1" fill="#000"/>
<rect x="689" y="145" width="1" height="1" fill="#000"/>
<rect x="691" y="145" width="1" height="1" fill="#000"/>
<rect x="693" y="145" width="1" height="1" fill="#000"/>
<rect x="695" y="145" width="1" height="1" fill="#000"/>
<rect x="697" y="145" width="1" height="1" fill="#000"/>
<rect x="699" y="145" width="1" height="1" fill="#000"/>
<rect x="701" y="145" width="1" height="1" fill="#000"/>
<rect x="703" y="145" width="1" height="1" fill="#000"/>
<rect x="705" y="145" width="1" height="1" fill="#000"/>
<rect x="707" y="145" width="1" height="1" fill="#000"/>
<rect x="709" y="145" width="1" height="1" fill="#000"/>
<rect x="711" y="145" width="1" height="1" fill="#000"/>
<rect x="713" y="145" width="1" height="1" fill="#000"/>
<rect x="715" y="145" width="1" height="1" fill="#000"/>
<rect x="717" y="145" width="1" height="1" fill="#000"/>
<rect x="719" y="145" width="1" height="1" fill="#000"/>
<rect x="721" y="145" width="1" height="1" fill="#000"/>
<rect x="723" y="145" width="1" height="1" fill="#000"/>
<rect x="725" y="145" width="1" height="1" fill="#000"/>
<rect x="727" y="145" width="1" height="1" fill="#000"/>
<rect x="729" y="145" width="1" height="1" fill="#000"/>
<rect x="731" y="145" width="1" height="1" fill="#000"/>
<rect x="733" y="145" width="1" height="1" fill="#000"/>
<rect x="735" y="145" width="1" height="1" fill="#000"/>
<rect x="737" y="145" width="1" height="1" fill="#000"/>
<rect x="739" y="145" width="1" height="1" fill="#000"/>
<rect x="741" y="145" width="1" height="1" fill="#000"/>
<rect x="743" y="145" width="1" height="1" fill="#000"/>
<rect x="745" y="145" width="1" height="1" fill="#000"/>
<rect x="747" y="145" width="1" height="1" fill="#000"/>
<rect x="749" y="145" width="1" height="1" fill="#000"/>
<rect x="751" y="145" width="1" height="1" fill="#000"/>
<rect x="753" y="145" width="1" height="1" fill="#000"/>
<rect x="755" y="145" width="1" height="1" fill="#000"/>
<rect x="757" y="145" width="1" height="1" fill="#000"/>
<rect x="759" y="145" width="1" height="1" fill="#000"/>
<rect x="761" y="145" width="1" height="1" fill="#000"/>
<rect x="763" y="145" width="1" height="1" fill="#000"/>
<rect x="765" y="145" width="1" height="1" fill="#000"/>
<rect x="767" y="145" width="1" height="1" fill="#000"/>
<rect x="769" y="145" width="1" height="1" fill="#000"/>
<rect x="771" y="145" width="1" height="1" fill="#000"/>
<rect x="773" y="145" width="1" height="1" fill="#000"/>
<rect x="775" y="145" width="1" height="1" fill="#000"/>
<rect x="777" y="145" width="1" height="1" fill="#000"/>
<rect x="779" y="145" width="1" height="1" fill="#000"/>
<rect x="781" y="145" width="1" height="1" fill="#000"/>
<rect x="783" y="145" width="1" height="1" fill="#000"/>
<rect x="785" y="145" width="1" height="1" fill="#000"/>
<rect x="787" y="145" width="1" height="1" fill="#000"/>
<rect x="789" y="145" width="1" height="1" fill="#000"/>
<rect x="791" y="145" width="1" height="1" fill="#000"/>
<rect x="793" y="145" width="1" height="1" fill="#000"/>
<rect x="795" y="145" width="1" height="1" fill="#000"/>
<rect x="797" y="145" width="1" height="1" fill="#000"/>
<rect x="799" y="145" width="1" height="1" fill="#000"/>
<rect x="801" y="145" width="1" height="1" fill="#000"/>
<rect x="803" y="145" width="1" height="1" fill="#000"/>
<rect x="805" y="145" width="1" height="1" fill="#000"/>
<rect x="807" y="145" width="1" height="1" fill="#000"/>
<rect x="809" y="145" width="1" height="1" fill="#000"/>
<rect x="811" y="145" width="1" height="1" fill="#000"/>
<rect x="813" y="145" width="1" height="1" fill="#000"/>
<rect x="815" y="145" width="1" height="1" fill="#000"/>
<rect x="817" y="145" width="1" height="1" fill="#000"/>
<rect x="819" y="145" width="1" height="1" fill="#000"/>
<rect x="821" y="145" width="1" height="1" fill="#000"/>
<rect x="823" y="145" width="1" height="1" fill="#000"/>
<rect x="825" y="145" width="1" height="1" fill="#000"/>
<rect x="827" y="145" width="1" height="1" fill="#000"/>
<rect x="829" y="145" width="1" height="1" fill="#000"/>
<rect x="831" y="145" width="1" height="1" fill="#000"/>
<rect x="833" y="145" width="1" height="1" fill="#000"/>
<rect x="835" y="145" width="1" height="1" fill="#000"/>
<rect x="837" y="145" width="1" height="1" fill="#000"/>
<rect x="30" y="131" width="1" height="1" fill="#000"/>
<rect x="838" y="131" width="1" height="1" fill="#000"/>
<rect x="30" y="133" width="1" height="1" fill="#000"/>
<rect x="838" y="133" width="1" height="1" fill="#000"/>
<rect x="30" y="135" width="1" height="1" fill="#000"/>
<rect x="838" y="135" width="1" height="1" fill="#000"/>
<rect x="30" y="137" width="1" height="1" fill="#000"/>
<rect x="838" y="137" width="1" height="1" fill="#000"/>
<rect x="30" y="139" width="1" height="1" fill="#000"/>
<rect x="838" y="139" width="1" height="1" fill="#000"/>
<rect x="30" y="141" width="1" height="1" fill="#000"/>
<rect x="838" y="141" width="1" height="1" fill="#000"/>
<rect x="30" y="143" width="1" height="1" fill="#000"/>
<rect x="838" y="143" width="1" height="1" fill="#000"/>
<rect x="30" y="145" width="1" height="1" fill="#000"/>
<rect x="838" y="145" width="1" height="1" fill="#000"/>
<rect x="978" y="87" width="17" height="57" fill="url(#dith)"/>
<rect x="978" y="56" width="17" height="17" fill="#000"/>
<rect x="979" y="57" width="15" height="15" fill="#f0f0f0"/>
<rect x="978" y="73" width="17" height="14" fill="#000"/>
<rect x="979" y="74" width="15" height="12" fill="#f0f0f0"/>
<rect x="978" y="144" width="17" height="17" fill="#000"/>
<rect x="979" y="145" width="15" height="15" fill="#f0f0f0"/>
<path d="M982 67 L986.5 62 L991 67 Z" fill="#000" shape-rendering="auto"/>
<path d="M982 150.5 L986.5 155.5 L991 150.5 Z" fill="#000" shape-rendering="auto"/>
<rect x="3" y="168" width="1017" height="1" fill="#eaf4f4"/>
<rect x="3" y="169" width="1017" height="1" fill="#e8f0f0"/>
<rect x="10" y="173" width="1004" height="5" fill="#b9b9b9"/>
<rect x="10" y="173" width="1004" height="1" fill="#c4cacb"/>
<rect x="10" y="178" width="1004" height="1" fill="#8f8f8f"/>
<rect x="7" y="442" width="1013" height="7" fill="#b6b6b6"/>
<rect x="7" y="442" width="1013" height="1" fill="#c0c8c8"/>
<rect x="7" y="447" width="1013" height="1" fill="#c8c8c8"/>
<rect x="3" y="448" width="1017" height="1" fill="#7a7a7a"/>
<rect x="11" y="178" width="1" height="261" fill="#8a8a8a"/>
<rect x="350" y="178" width="1" height="261" fill="#fff"/>
<rect x="11" y="438" width="340" height="1" fill="#fff"/>
<rect x="17" y="184" width="328" height="250" fill="#fff"/>
<rect x="17" y="184" width="328" height="1" fill="#a0a0a0"/>
<rect x="17" y="184" width="1" height="250" fill="#a0a0a0"/>
<rect x="344" y="184" width="1" height="250" fill="#a0a0a0"/>
<rect x="17" y="433" width="328" height="1" fill="#a0a0a0"/>
<rect x="18" y="185" width="316" height="55" fill="#a6caf0"/>
<rect x="31" y="223" width="83" height="17" fill="#fffbf0"/>
<rect x="115" y="223" width="218" height="17" fill="#f6f6f6"/>
<rect x="18" y="185" width="316" height="1" fill="#000"/>
<rect x="18" y="185" width="1" height="56" fill="#000"/>
<rect x="333" y="185" width="1" height="55" fill="#000"/>
<rect x="18" y="240" width="97" height="1" fill="#000"/>
<rect x="115" y="240" width="219" height="1" fill="#b0b0b0"/>
<rect x="29" y="185" width="1" height="56" fill="#000"/>
<rect x="30" y="185" width="1" height="38" fill="#000"/>
<rect x="31" y="203" width="303" height="1" fill="#000"/>
<rect x="31" y="204" width="303" height="1" fill="#000"/>
<rect x="19" y="222" width="315" height="1" fill="#000"/>
<rect x="114" y="205" width="1" height="17" fill="#000"/>
<rect x="114" y="223" width="1" height="17" fill="#a0a0a4"/>
<rect x="115" y="223" width="218" height="1" fill="#000"/>
<rect x="115" y="223" width="1" height="17" fill="#000"/>
<rect x="115" y="239" width="218" height="1" fill="#000"/>
<rect x="332" y="223" width="1" height="17" fill="#000"/>
<path d="M22 227 L27.5 231.5 L22 236 Z" fill="#000" shape-rendering="auto"/>
<rect x="361" y="178" width="1" height="261" fill="#8a8a8a"/>
<rect x="362" y="179" width="1" height="260" fill="#f8f8f8"/>
<rect x="1012" y="178" width="1" height="261" fill="#fff"/>
<rect x="361" y="438" width="652" height="1" fill="#fff"/>
<rect x="368" y="198" width="638" height="235" fill="#fff"/>
<rect x="368" y="198" width="638" height="1" fill="#a0a0a0"/>
<rect x="368" y="198" width="1" height="235" fill="#a0a0a0"/>
<rect x="1005" y="198" width="1" height="235" fill="#a0a0a0"/>
<rect x="368" y="432" width="638" height="1" fill="#a0a0a0"/>
</g>
<text x="80" y="199" font-size="12" font-weight="bold" textLength="204" lengthAdjust="spacingAndGlyphs" xml:space="preserve">Offenses for Case # 16-0128-00-001</text>
<text x="33.5" y="218" font-size="12" font-weight="bold" textLength="75.5" lengthAdjust="spacingAndGlyphs" xml:space="preserve">Code Section</text>
<text x="118" y="218" font-size="12" font-weight="bold" textLength="63.5" lengthAdjust="spacingAndGlyphs" xml:space="preserve">Description</text>
<text x="33" y="236" font-size="12" textLength="41.5" lengthAdjust="spacingAndGlyphs" xml:space="preserve">3735.1-A</text>
<svg x="116" y="222" width="216" height="18" overflow="hidden">
<text x="1.2" y="14" font-size="12" textLength="228.5" lengthAdjust="spacingAndGlyphs" xml:space="preserve">AGGRAVATED ASSAULT BY VEHICLE WHILE</text>
</svg>
<text x="641" y="195" font-size="12" font-weight="bold" textLength="91.5" lengthAdjust="spacingAndGlyphs" xml:space="preserve">Modus Operandi</text>
<text x="370.5" y="211" font-size="11" font-weight="bold" fill="#101020" textLength="92.5" lengthAdjust="spacingAndGlyphs" xml:space="preserve">Method of Entry:</text>
<rect x="370" y="212" width="96" height="1" fill="#101020"/>
<text x="370" y="221" font-size="9" fill="#202030" textLength="84.5" lengthAdjust="spacingAndGlyphs" xml:space="preserve">AXE, BRICK, CROWBAR</text>
<g filter="url(#ash)">
<path fill="#fc4444" fill-rule="evenodd" d="M17 128 H842 V149 H17 Z M20 131 V146 H839 V131 Z"/>
</g>
<g shape-rendering="crispEdges">
<rect x="1017" y="173" width="3" height="272" fill="#d4d6d8"/>
<rect x="10" y="173" width="2" height="266" fill="#d0d4d4"/>
<rect x="11" y="178" width="1" height="261" fill="#8a8a8a"/>
<rect x="12" y="179" width="1" height="260" fill="#e2e3e6"/>
<rect x="13" y="179" width="1" height="260" fill="#e8e8ea"/>
<path fill="#fc4444" fill-rule="evenodd" d="M7 170 H1017 V442 H7 Z M10 173 V439 H1014 V173 Z"/>
</g>
<g filter="url(#ash)" shape-rendering="auto">
<path fill="#fc4444" d="M408.8 33.5 L383.7 101.2 L375.6 98.4 L379.5 130.5 L402.6 107.9 L394.5 105.0 L417.2 36.5 A4.5 4.5 0 0 0 408.8 33.5 Z"/>
<path fill="#fc4444" d="M960.8 116.8 L893.6 153.6 L889.4 146.2 L871.3 173.0 L903.6 171.1 L899.3 163.6 L965.2 124.6 A4.5 4.5 0 0 0 960.8 116.8 Z"/>
</g>
</svg>
</body></html>
